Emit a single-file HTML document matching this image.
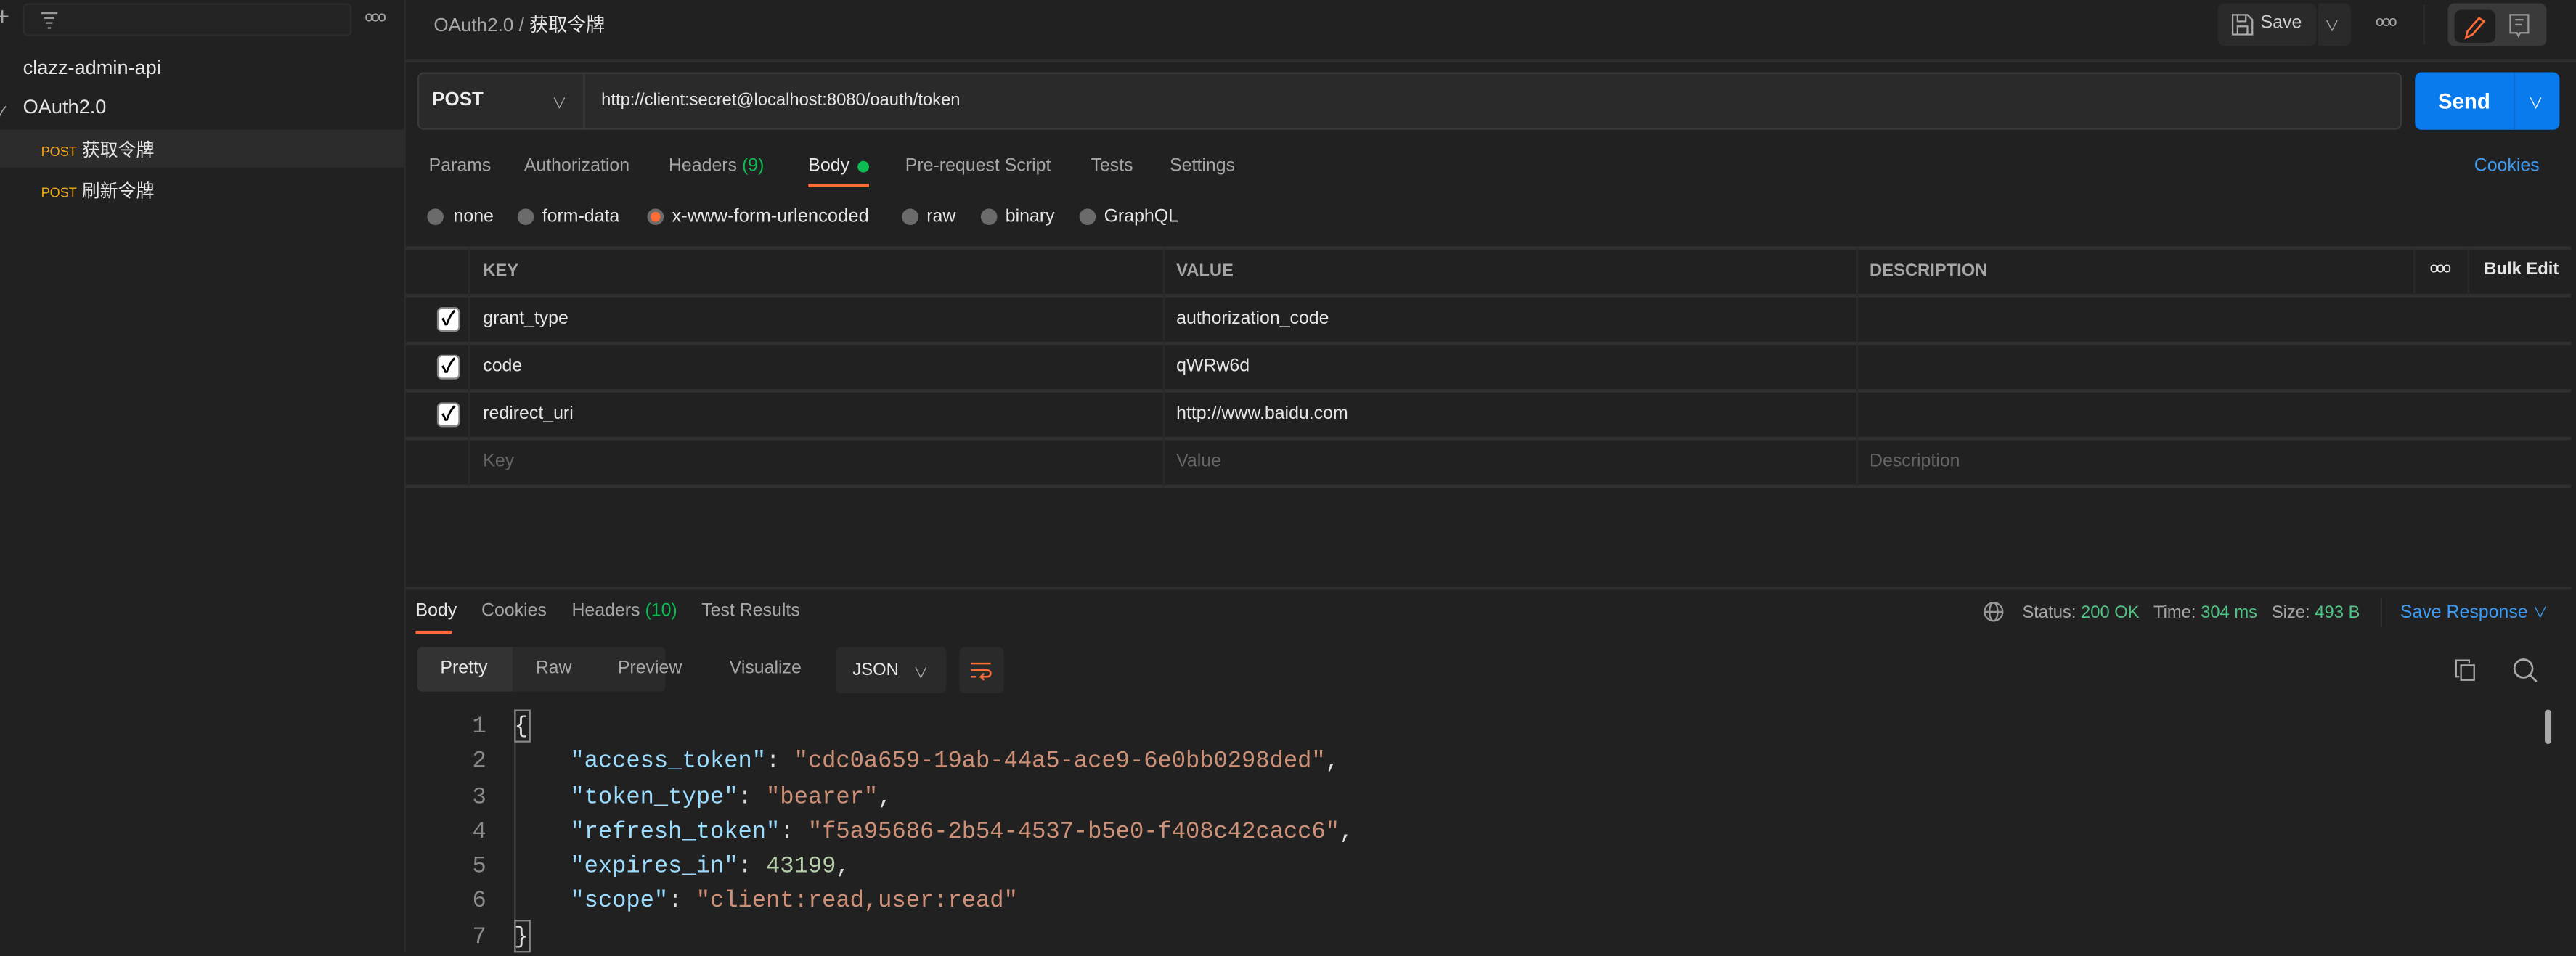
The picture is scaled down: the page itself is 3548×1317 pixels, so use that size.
<!DOCTYPE html>
<html><head><meta charset="utf-8"><style>
*{margin:0;padding:0;box-sizing:border-box}
html,body{width:3548px;height:1312px;overflow:hidden;background:#212121}
#w{position:absolute;left:0;top:0;width:1568px;height:580px;transform:scale(2.26276);transform-origin:0 0;font-family:"Liberation Sans","Noto Sans CJK SC",sans-serif;color:#e6e6e6;font-size:11px;background:#212121}
.a{position:absolute;white-space:nowrap}
.g{color:#a6a6a6}
.mono{font-family:"Liberation Mono","DejaVu Sans Mono",monospace}
.hl{position:absolute;height:1px;background:#303030}
.vl{position:absolute;width:1px;background:#303030}
.rad{position:absolute;width:10px;height:10px;border-radius:50%;background:#6b6b6b}
.cb{position:absolute;width:14px;height:15px;border-radius:3px;background:#fff;border:1px solid #888;color:#000;font-size:12px;line-height:13px;text-align:center;font-weight:bold}
.k{color:#9cdcfe}.s{color:#ce9178}.n{color:#b5cea8}
</style></head><body><div id="w">
<!-- sidebar -->
<div class="vl" style="left:246px;top:0;height:580px;background:#2c2c2c"></div>
<div class="a g" style="left:-3px;top:2px;font-size:15px">+</div>
<div class="a" style="left:14px;top:2px;width:200px;height:20px;border:1px solid #2c2c2c;border-radius:3px;background:#232323"></div>
<svg class="a" style="left:24px;top:6px" width="12" height="12"><path d="M1 2h10M3 5h6M4 8h4M5 11h2" stroke="#999" stroke-width="1"/></svg>
<div class="a g" style="left:222px;top:5px;font-size:9px;letter-spacing:-1px">ooo</div>
<div class="a g" style="left:-3px;top:35px;font-size:10px">›</div>
<div class="a" style="left:14px;top:34px;font-size:12px">clazz-admin-api</div>
<div class="a g" style="left:-3px;top:60px;font-size:10px">✓</div>
<div class="a" style="left:14px;top:58px;font-size:12px">OAuth2.0</div>
<div class="a" style="left:0;top:79px;width:246px;height:23px;background:#2c2c2c"></div>
<div class="a" style="left:25px;top:83px;font-size:11px"><span style="color:#f2a618;font-size:8px">POST</span> 获取令牌</div>
<div class="a" style="left:25px;top:108px;font-size:11px"><span style="color:#f2a618;font-size:8px">POST</span> 刷新令牌</div>
<!-- top bar -->
<div class="a" style="left:264px;top:7px;font-size:11.5px"><span class="g">OAuth2.0</span> <span class="g">/</span> 获取令牌</div>
<div class="hl" style="left:247px;top:36px;width:1321px;background:#2e2e2e;height:2px"></div>
<div class="a" style="left:1350px;top:2px;width:60px;height:26px;background:#2a2a2a;border-radius:4px"></div>
<svg class="a" style="left:1358px;top:8px" width="14" height="14"><path d="M1 1h9l3 3v9H1z M4 1v4h5V1 M4 13V8h6v5" fill="none" stroke="#aaa" stroke-width="1"/></svg>
<div class="a" style="left:1376px;top:8px;font-size:11px;color:#ccc">Save</div>
<div class="a" style="left:1411px;top:2px;width:20px;height:26px;background:#2a2a2a;border-radius:0 4px 4px 0"></div>
<div class="a g" style="left:1415px;top:9px;font-size:9px">∨</div>
<div class="a g" style="left:1446px;top:8px;font-size:9px;letter-spacing:-1px">ooo</div>
<div class="vl" style="left:1475px;top:3px;height:24px"></div>
<div class="a" style="left:1490px;top:2px;width:60px;height:26px;background:#3a3a3a;border-radius:4px"></div>
<div class="a" style="left:1494px;top:6px;width:25px;height:20px;background:#1f1f1f;border-radius:4px"></div>
<svg class="a" style="left:1499px;top:9px" width="16" height="16"><path d="M2 14l1-4 7-8 3 2-7 8z" fill="none" stroke="#ff6c37" stroke-width="1.2"/></svg>
<svg class="a" style="left:1527px;top:8px" width="14" height="16"><path d="M1 1h11v11H7l-1 2-1-2H1z M4 4h5M4 7h4" fill="none" stroke="#999" stroke-width="1"/></svg>
<!-- url -->
<div class="a" style="left:254px;top:44px;width:1208px;height:35px;background:#2a2a2a;border:1px solid #3a3a3a;border-radius:4px"></div>
<div class="vl" style="left:355px;top:45px;height:33px;background:#3a3a3a"></div>
<div class="a" style="left:263px;top:55px;font-size:11.5px;font-weight:bold;color:#eee">POST</div>
<div class="a g" style="left:336px;top:56px;font-size:9px">∨</div>
<div class="a" style="left:366px;top:55px;font-size:10.5px;color:#e6e6e6">http://client:secret@localhost:8080/oauth/token</div>
<div class="a" style="left:1470px;top:44px;width:88px;height:35px;background:#097bed;border-radius:4px"></div>
<div class="vl" style="left:1530px;top:44px;height:35px;background:#0a6fd6"></div>
<div class="a" style="left:1484px;top:54px;font-size:13px;font-weight:bold;color:#fff">Send</div>
<div class="a" style="left:1539px;top:56px;font-size:9px;color:#fff">∨</div>
<!-- tabs -->
<div class="a g" style="left:261px;top:95px">Params</div>
<div class="a g" style="left:319px;top:95px">Authorization</div>
<div class="a g" style="left:407px;top:95px">Headers <span style="color:#0cbb52">(9)</span></div>
<div class="a" style="left:492px;top:95px">Body</div>
<div class="a" style="left:522px;top:98px;width:7px;height:7px;border-radius:50%;background:#0cbb52"></div>
<div class="a" style="left:492px;top:112px;width:37px;height:2px;background:#ff6c37"></div>
<div class="a g" style="left:551px;top:95px">Pre-request Script</div>
<div class="a g" style="left:664px;top:95px">Tests</div>
<div class="a g" style="left:712px;top:95px">Settings</div>
<div class="a" style="left:1506px;top:95px;color:#3d9cf5">Cookies</div>
<!-- radios -->
<div class="rad" style="left:260px;top:127px"></div><div class="a" style="left:276px;top:126px">none</div>
<div class="rad" style="left:315px;top:127px"></div><div class="a" style="left:330px;top:126px">form-data</div>
<div class="rad" style="left:394px;top:127px;background:#ff6c37;border:2px solid #6b6b6b"></div><div class="a" style="left:409px;top:126px;font-size:11.3px">x-www-form-urlencoded</div>
<div class="rad" style="left:549px;top:127px"></div><div class="a" style="left:564px;top:126px">raw</div>
<div class="rad" style="left:597px;top:127px"></div><div class="a" style="left:612px;top:126px">binary</div>
<div class="rad" style="left:657px;top:127px"></div><div class="a" style="left:672px;top:126px">GraphQL</div>
<!-- table -->
<div class="hl" style="left:247px;top:150px;width:1318px;height:2px"></div>
<div class="hl" style="left:247px;top:179px;width:1318px;height:2px"></div>
<div class="hl" style="left:247px;top:208px;width:1318px;height:2px"></div>
<div class="hl" style="left:247px;top:237px;width:1318px;height:2px"></div>
<div class="hl" style="left:247px;top:266px;width:1318px;height:2px"></div>
<div class="hl" style="left:247px;top:295px;width:1318px;height:2px"></div>
<div class="vl" style="left:285px;top:151px;height:145px;background:#2a2a2a"></div>
<div class="vl" style="left:708px;top:151px;height:145px;background:#2a2a2a"></div>
<div class="vl" style="left:1130px;top:151px;height:145px;background:#2a2a2a"></div>
<div class="vl" style="left:1469px;top:151px;height:29px;background:#2a2a2a"></div>
<div class="vl" style="left:1502px;top:151px;height:29px;background:#2a2a2a"></div>
<div class="a g" style="left:294px;top:159px;font-weight:bold;font-size:10.5px">KEY</div>
<div class="a g" style="left:716px;top:159px;font-weight:bold;font-size:10.5px">VALUE</div>
<div class="a g" style="left:1138px;top:159px;font-weight:bold;font-size:10.5px">DESCRIPTION</div>
<div class="a" style="left:1479px;top:158px;font-size:9px;letter-spacing:-1px">ooo</div>
<div class="a" style="left:1512px;top:158px;font-weight:bold;font-size:10.5px">Bulk Edit</div>
<div class="cb" style="left:266px;top:187px">✓</div>
<div class="cb" style="left:266px;top:216px">✓</div>
<div class="cb" style="left:266px;top:245px">✓</div>
<div class="a" style="left:294px;top:188px">grant_type</div>
<div class="a" style="left:716px;top:188px">authorization_code</div>
<div class="a" style="left:294px;top:217px">code</div>
<div class="a" style="left:716px;top:217px">qWRw6d</div>
<div class="a" style="left:294px;top:246px">redirect_uri</div>
<div class="a" style="left:716px;top:246px">http://www.baidu.com</div>
<div class="a" style="left:294px;top:275px;color:#666">Key</div>
<div class="a" style="left:716px;top:275px;color:#666">Value</div>
<div class="a" style="left:1138px;top:275px;color:#666">Description</div>
<!-- response -->
<div class="hl" style="left:247px;top:357px;width:1318px;height:2px;background:#2e2e2e"></div>
<div class="a" style="left:253px;top:366px">Body</div>
<div class="a" style="left:253px;top:384px;width:22px;height:2px;background:#ff6c37"></div>
<div class="a g" style="left:293px;top:366px">Cookies</div>
<div class="a g" style="left:348px;top:366px">Headers <span style="color:#0cbb52">(10)</span></div>
<div class="a g" style="left:427px;top:366px">Test Results</div>
<svg class="a" style="left:1207px;top:366px" width="13" height="13"><circle cx="6.5" cy="6.5" r="5.5" fill="none" stroke="#999"/><ellipse cx="6.5" cy="6.5" rx="2.5" ry="5.5" fill="none" stroke="#999"/><path d="M1 6.5h11" stroke="#999"/></svg>
<div class="a g" style="left:1231px;top:367px;font-size:10.5px">Status: <span style="color:#4fc383">200 OK</span>&nbsp;&nbsp; Time: <span style="color:#4fc383">304 ms</span>&nbsp;&nbsp; Size: <span style="color:#4fc383">493 B</span></div>
<div class="vl" style="left:1449px;top:364px;height:18px"></div>
<div class="a" style="left:1461px;top:366px;color:#3d9cf5">Save Response <span style="font-size:9px">∨</span></div>
<div class="a" style="left:254px;top:394px;width:151px;height:27px;background:#2a2a2a;border-radius:3px"></div>
<div class="a" style="left:254px;top:394px;width:58px;height:27px;background:#333;border-radius:3px 0 0 3px"></div>
<div class="a" style="left:268px;top:401px">Pretty</div>
<div class="a g" style="left:326px;top:401px">Raw</div>
<div class="a g" style="left:376px;top:401px">Preview</div>
<div class="a g" style="left:444px;top:401px">Visualize</div>
<div class="a" style="left:509px;top:394px;width:67px;height:28px;background:#2a2a2a;border-radius:3px"></div>
<div class="a" style="left:519px;top:402px;font-size:10.5px">JSON</div>
<div class="a g" style="left:556px;top:403px;font-size:9px">∨</div>
<div class="a" style="left:584px;top:394px;width:27px;height:28px;background:#2a2a2a;border-radius:3px"></div>
<svg class="a" style="left:590px;top:401px" width="15" height="15"><path d="M1 3h12M1 7h10a2 2 0 010 4H7l2-2M7 11l2 2M1 11h3" fill="none" stroke="#ff6c37" stroke-width="1.1"/></svg>
<svg class="a" style="left:1494px;top:401px" width="14" height="14"><path d="M3 11H1V1h8v2 M4 4h8v9H4z" fill="none" stroke="#aaa"/></svg>
<svg class="a" style="left:1529px;top:400px" width="16" height="16"><circle cx="7" cy="7" r="5.5" fill="none" stroke="#aaa" stroke-width="1.2"/><path d="M11 11l4 4" stroke="#aaa" stroke-width="1.2"/></svg>
<!-- code -->
<div class="vl" style="left:313px;top:432px;height:148px;background:#444"></div>
<div class="a" style="left:313px;top:432px;width:10px;height:20px;border:1px solid #888"></div>
<div class="a" style="left:313px;top:560px;width:10px;height:20px;border:1px solid #888"></div>
<div class="a mono" style="left:282px;top:433px;font-size:14.2px;line-height:21.3px;color:#8a8a8a;text-align:right;width:14px">1<br>2<br>3<br>4<br>5<br>6<br>7</div>
<div class="a mono" style="left:313px;top:433px;font-size:14.2px;line-height:21.3px;color:#ddd">{<br>&nbsp;&nbsp;&nbsp;&nbsp;<span class="k">"access_token"</span>: <span class="s">"cdc0a659-19ab-44a5-ace9-6e0bb0298ded"</span>,<br>&nbsp;&nbsp;&nbsp;&nbsp;<span class="k">"token_type"</span>: <span class="s">"bearer"</span>,<br>&nbsp;&nbsp;&nbsp;&nbsp;<span class="k">"refresh_token"</span>: <span class="s">"f5a95686-2b54-4537-b5e0-f408c42cacc6"</span>,<br>&nbsp;&nbsp;&nbsp;&nbsp;<span class="k">"expires_in"</span>: <span class="n">43199</span>,<br>&nbsp;&nbsp;&nbsp;&nbsp;<span class="k">"scope"</span>: <span class="s">"client:read,user:read"</span><br>}</div>
<div class="a" style="left:1549px;top:432px;width:4px;height:21px;background:#aaa;border-radius:2px"></div>
</div></body></html>
